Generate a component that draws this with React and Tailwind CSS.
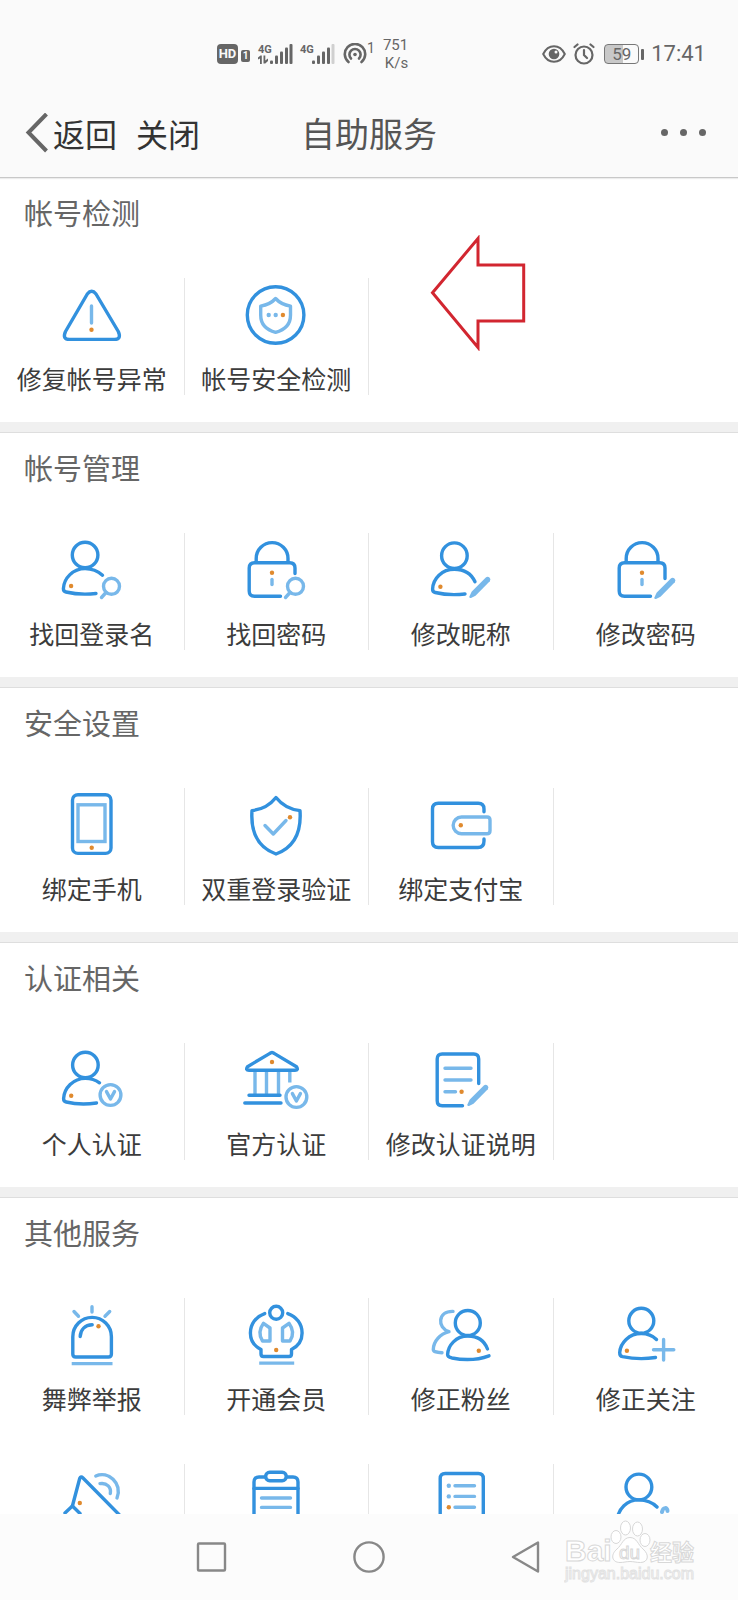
import React from "react";

const DARK = "#3291de";
const LIGHT = "#78b8ea";
const ORANGE = "#e08a2e";

/* ---------- Icon building blocks ---------- */

const Icon = ({ children }) => (
  <svg
    viewBox="0 0 64 64"
    className="w-16 h-16 overflow-visible"
    fill="none"
    stroke={DARK}
    strokeWidth="3.4"
    strokeLinecap="round"
    strokeLinejoin="round"
    aria-hidden="true"
  >
    {children}
  </svg>
);

const Dot = ({ x, y, color = ORANGE }) => (
  <circle cx={x} cy={y} r="2.2" fill={color} stroke="none" />
);

const Magnifier = () => (
  <g stroke={LIGHT}>
    <circle cx="51.5" cy="48.3" r="8" />
    <path d="M46 54.5 41.5 59.5" />
  </g>
);

const Pen = ({ x = 0, y = 0 }) => (
  <path
    transform={`translate(${x} ${y})`}
    d="M56.8 39.6a2.7 2.7 0 0 1 4 3.6L46.5 57.8 42 60Q40 60.4 40.4 58.4L42.6 53.8Z"
    fill={LIGHT}
    stroke="none"
  />
);

const VBadge = ({ x, y }) => (
  <g stroke={LIGHT} transform={`translate(${x} ${y})`}>
    <circle r="10.4" />
    <path d="M-4-3.4 0 4 4-3.4" />
  </g>
);

const LockBody = ({ end }) => (
  <>
    <path d="M12.2 24.7V20.5a15.9 15.9 0 0 1 31.8 0V24.7" strokeLinecap="butt" />
    <path
      d={`M51 ${end}V30Q51 24.7 45.7 24.7H10.5Q5.2 24.7 5.2 30V53Q5.2 58.3 10.5 58.3H36.5`}
    />
    <Dot x={28} y={34.7} />
    <path d="M28 41.5V46.5" stroke={LIGHT} />
  </>
);

/* ---------- Icons ---------- */

const WarningIcon = () => (
  <Icon>
    <path d="M27.3 11 5.5 48.5Q2 56.4 9.5 56.4H54.3Q61.8 56.4 58.3 48.5L36 11Q31.7 5.6 27.3 11Z" />
    <path d="M31.5 23V40" stroke={LIGHT} />
    <Dot x={31.5} y={46.7} />
  </Icon>
);

const CheckupIcon = () => (
  <Icon>
    <circle cx="31.6" cy="32" r="28.3" />
    <path
      d="M31.6 15.5Q37 21.5 46.5 23.2V32C46.5 41.5 40.5 47 31.6 49.3 22.7 47 16.7 41.5 16.7 32V23.2Q26.2 21.5 31.6 15.5Z"
      stroke={LIGHT}
    />
    <Dot x={24.7} y={32} color={LIGHT} />
    <Dot x={31.7} y={32} color={LIGHT} />
    <Dot x={38.9} y={32} />
  </Icon>
);

const FindUserIcon = () => (
  <Icon>
    <circle cx="25.1" cy="17" r="12.8" />
    <path d="M42.5 37.2C37.5 32.7 32 30.6 25.1 30.6 13 30.6 4 40 3.4 50.5Q3.3 53.4 6 54 20 57.3 36 55.5" />
    <Dot x={11.1} y={48} />
    <Magnifier />
  </Icon>
);

const FindLockIcon = () => (
  <Icon>
    <LockBody end={35.5} />
    <Magnifier />
  </Icon>
);

const EditUserIcon = () => (
  <Icon>
    <circle cx="25.4" cy="17.7" r="12.8" />
    <path d="M46 43.8C42.5 36 35 31.2 25.4 31.2 13 31.2 4 40.5 3.6 51Q3.5 53.9 6.2 54.5 20 57.8 36 56" />
    <Dot x={11.4} y={48.7} />
    <Pen />
  </Icon>
);

const EditLockIcon = () => (
  <Icon>
    <LockBody end={40.5} />
    <Pen y={1} />
  </Icon>
);

const PhoneIcon = () => (
  <Icon>
    <rect x="12.5" y="1.7" width="38.5" height="58.7" rx="5.5" />
    <rect x="18" y="11.8" width="27" height="36.7" stroke={LIGHT} strokeLinejoin="miter" />
    <Dot x={31.7} y={54.7} />
  </Icon>
);

const ShieldIcon = () => (
  <Icon>
    <path d="M32 4.5C38 12 45.5 16.5 56 17.6 57.5 39 51 54 32 61 13 54 6.5 39 8 17.6 18.5 16.5 26 12 32 4.5Z" />
    <path d="M21 32.5 29.3 41 42 27.5" stroke={LIGHT} />
    <Dot x={46} y={24.2} />
  </Icon>
);

const WalletIcon = () => (
  <Icon>
    <path d="M55 18.7V16Q55 10.2 49.2 10.2H9.3Q3.5 10.2 3.5 16V48.7Q3.5 54.5 9.3 54.5H49Q55 54.5 55 48V46" />
    <path
      d="M32.5 24H58Q61 24 61 27V37.7Q61 40.7 58 40.7H32.5A8.35 8.35 0 0 1 32.5 24Z"
      stroke={LIGHT}
    />
    <Dot x={31.8} y={32.3} />
  </Icon>
);

const PersonalVIcon = () => (
  <Icon>
    <circle cx="25.4" cy="17" r="12.8" />
    <path d="M39.5 34.8C35.5 31.9 31 30.4 25.4 30.4 13.2 30.4 4.2 40 3.6 50.5Q3.5 53.4 6.2 54 20 57.3 36.5 55" />
    <Dot x={11.2} y={47.7} />
    <VBadge x={50.5} y={47} />
  </Icon>
);

const OfficialVIcon = () => (
  <Icon>
    <path d="M25.5 5.6 3.5 18.7Q1.2 22.3 5 22.3H51Q54.8 22.3 52.5 18.7L30.5 5.6Q28 3.4 25.5 5.6Z" />
    <Dot x={28} y={14} />
    <path d="M11 24V46M22.5 24V46M34.5 24V46M45.8 24V34.5" stroke={LIGHT} strokeLinecap="butt" />
    <path d="M5 47.3H36M.8 55H37" />
    <VBadge x={52.4} y={49} />
  </Icon>
);

const EditDocIcon = () => (
  <Icon>
    <path d="M49.7 35.5V11Q49.7 6 44.7 6H13.2Q8.2 6 8.2 11V52.7Q8.2 57.7 13.2 57.7H33.5" />
    <path d="M16 20.3H42M16 32H42M16 43.7H26.5" stroke={LIGHT} />
    <Dot x={32.6} y={43.7} />
    <Pen x={-2} y={-2} />
  </Icon>
);

const SirenIcon = () => (
  <Icon>
    <path d="M12.8 51V33.7a19.3 19.3 0 0 1 38.6 0V51Q51.4 54 48.4 54H15.8Q12.8 54 12.8 51Z" />
    <path d="M20.2 33.5C20.5 26.5 25 22 32.2 21.7" />
    <path d="M32 3.7V9M14 8.5 18.5 13.2M49.7 8.5 45 13.2" stroke={LIGHT} />
    <path d="M11.7 60.6H52.5" stroke={LIGHT} strokeLinecap="butt" />
    <Dot x={38.5} y={23.2} />
  </Icon>
);

const MemberIcon = () => (
  <Icon>
    <circle cx="32.2" cy="9.8" r="6.5" />
    <path d="M20.7 10.6C12 13.7 6.4 21 6.4 30 6.4 37 10.5 43.2 17 46.5V51Q17 53.5 19.5 53.5H45Q47.5 53.5 47.5 51V46.5C54 43.2 58.1 37 58.1 30 58.1 21 52.5 13.7 43.8 10.6" />
    <path
      d="M19.5 20.3 26 25V38H18.5Q12.8 29.5 19.5 20.3ZM45 20.3 38.5 25V38H46Q51.7 29.5 45 20.3Z"
      stroke={LIGHT}
    />
    <path d="M15.2 60.1H50.2" stroke={LIGHT} strokeLinecap="butt" />
    <Dot x={32.2} y={47} />
  </Icon>
);

const FansIcon = () => (
  <Icon>
    <path
      d="M24 8.4C8.5 8 8 25 20 28.7 11 31 4.5 38.5 4.3 46.5 4.3 49 8 49.3 13 49.7"
      stroke={LIGHT}
    />
    <circle cx="38.8" cy="20" r="12.5" />
    <path d="M58.5 46C55.5 38 48.5 33 38.8 33 27 33 19 42.5 18.6 51.5 18.6 54 21 54.5 23 55 36 57.5 50 56.5 60 52.8" />
    <Dot x={49.8} y={47.7} />
  </Icon>
);

const FollowIcon = () => (
  <Icon>
    <circle cx="27.3" cy="17.8" r="12.5" />
    <path d="M42.5 36.5C38.5 32.5 33.5 30.5 27.3 30.5 15 30.5 6.3 40 5.7 49.5Q5.6 53 8.5 53.7 25 57 41.5 54.5" />
    <path d="M49.6 36.5V57M39.5 46.7H59.8" stroke={LIGHT} />
    <Dot x={12.9} y={47.7} />
  </Icon>
);

const MegaphoneIcon = () => (
  <Icon>
    <path d="M12.4 37 19.7 9.5Q20.8 6.8 23 9L60 46.5" />
    <path d="M5 44 12.4 37 20 44.5" />
    <path d="M40 14.6C47 13.5 51.5 18.5 50.3 24.5M35.8 7C48 1.5 62.5 14 57 29" stroke={LIGHT} />
    <Dot x={19.8} y={34} />
  </Icon>
);

const ClipboardIcon = () => (
  <Icon>
    <path d="M21.5 8H15Q10 8 10 13V60H54V13Q54 8 49 8H42.5" />
    <rect x="21.7" y="3.2" width="20.5" height="8.6" rx="4" />
    <path d="M10 19.4H54" />
    <path d="M17.5 29H46.5M17.5 38.4H46.5" stroke={LIGHT} />
  </Icon>
);

const ListIcon = () => (
  <Icon>
    <path d="M11.2 60V9.5Q11.2 4.5 16.2 4.5H49.3Q54.3 4.5 54.3 9.5V60Z" />
    <path d="M26 16.7H45.5M26 27.4H45.5M26 38.3H45.5" stroke={LIGHT} />
    <Dot x={19.8} y={16.7} color={LIGHT} />
    <Dot x={19.8} y={27.4} color={LIGHT} />
    <Dot x={19.8} y={38.3} />
  </Icon>
);

const UserLinkIcon = () => (
  <Icon>
    <circle cx="24.9" cy="18" r="12.9" />
    <path d="M43 38C38 33 32 30.9 24.9 30.9 13 30.9 4 40 3.4 50.5" />
    <path d="M48 43C49 38 53.5 38 53.5 42" stroke={LIGHT} strokeWidth="4" />
  </Icon>
);

/* ---------- Data ---------- */

const SECTIONS = [
  {
    title: "帐号检测",
    items: [
      { label: "修复帐号异常", icon: WarningIcon },
      { label: "帐号安全检测", icon: CheckupIcon },
    ],
    arrow: true,
  },
  {
    title: "帐号管理",
    items: [
      { label: "找回登录名", icon: FindUserIcon },
      { label: "找回密码", icon: FindLockIcon },
      { label: "修改昵称", icon: EditUserIcon },
      { label: "修改密码", icon: EditLockIcon },
    ],
  },
  {
    title: "安全设置",
    items: [
      { label: "绑定手机", icon: PhoneIcon },
      { label: "双重登录验证", icon: ShieldIcon },
      { label: "绑定支付宝", icon: WalletIcon },
    ],
  },
  {
    title: "认证相关",
    items: [
      { label: "个人认证", icon: PersonalVIcon },
      { label: "官方认证", icon: OfficialVIcon },
      { label: "修改认证说明", icon: EditDocIcon },
    ],
  },
  {
    title: "其他服务",
    items: [
      { label: "舞弊举报", icon: SirenIcon },
      { label: "开通会员", icon: MemberIcon },
      { label: "修正粉丝", icon: FansIcon },
      { label: "修正关注", icon: FollowIcon },
      { icon: MegaphoneIcon },
      { icon: ClipboardIcon },
      { icon: ListIcon },
      { icon: UserLinkIcon },
    ],
  },
];

/* ---------- Status bar ---------- */

const Signal = ({ weak }) => (
  <svg
    viewBox="0 0 35 22"
    className="w-[35px] h-[22px] overflow-visible"
    fill="#666"
    aria-hidden="true"
  >
    <text x="0" y="10" fontSize="11" fontWeight="700" fontFamily="Roboto, sans-serif">
      4G
    </text>
    {!weak && (
      <path d="M0 14.5 2.5 12.5H3.8V21H2V15.5L0 16.5ZM5.5 12.5H7.3V17.5L10 15.5V18L7.3 20.5H5.5Z" />
    )}
    <rect x="12" y="17.5" width="3" height="3.5" rx="1" />
    <rect x="17" y="12.5" width="3" height="8.5" rx="1" />
    <rect x="22" y="8.5" width="3" height="12.5" rx="1" />
    <rect x="27" y="4.5" width="3" height="16.5" rx="1" />
    <rect x="31.5" y="1" width="3" height="20" rx="1" fill={weak ? "#d0d0d0" : "#666"} />
  </svg>
);

const StatusBar = () => (
  <div className="flex h-[90px] items-center justify-between pt-[18px] pl-[217px] pr-8 font-[Roboto,sans-serif] text-[#666]">
    <div className="flex items-center">
      <span className="flex h-5 w-[21px] items-center justify-center rounded-[4px] bg-[#666] text-[13px] leading-5 font-bold text-[#fafafa]">
        HD
      </span>
      <span className="mt-1 ml-[3px] flex h-3 w-[9px] items-center justify-center rounded-[2px] bg-[#666] text-[10px] leading-3 font-bold text-[#fafafa]">
        1
      </span>
      <span className="ml-2 flex gap-[7px]">
        <Signal />
        <Signal weak />
      </span>
      <svg
        viewBox="0 0 24 22"
        className="ml-2 h-[22px] w-6"
        fill="none"
        stroke="#666"
        strokeWidth="2.6"
        strokeLinecap="round"
        aria-hidden="true"
      >
        <path d="M5.5 19A10.2 10.2 0 1 1 18.5 19" />
        <path d="M8 15.5A5.6 5.6 0 1 1 16 15.5" />
        <circle cx="12" cy="11.5" r="1.8" fill="#666" stroke="none" />
      </svg>
      <span className="mb-3 text-sm leading-3">1</span>
      <span className="ml-2 text-right text-[15px] leading-[18px]">
        751
        <br />
        K/s
      </span>
    </div>

    <div className="flex items-center">
      <svg
        viewBox="0 0 24 20"
        className="h-5 w-6"
        fill="none"
        stroke="#666"
        strokeWidth="2"
        aria-hidden="true"
      >
        <path d="M1.2 10Q5 2.2 12 2.2T22.8 10Q19 17.8 12 17.8T1.2 10Z" />
        <circle cx="12" cy="10" r="5.3" fill="#666" stroke="none" />
        <circle cx="14" cy="8" r="1.5" fill="#fafafa" stroke="none" />
      </svg>
      <svg
        viewBox="0 0 22 22"
        className="ml-[7px] h-[22px] w-[22px]"
        fill="none"
        stroke="#666"
        strokeWidth="2.2"
        strokeLinecap="round"
        aria-hidden="true"
      >
        <circle cx="11" cy="12" r="8.5" />
        <path d="M11 7V12L14 15M1.5 4 4.5 1.5M20.5 4 17.5 1.5" />
      </svg>
      <span className="ml-[9px] flex items-center gap-[2px]">
        <span className="flex h-5 w-[35px] items-center justify-center rounded-[4px] border border-[#777] bg-linear-to-r from-[#c8c8c8] from-55% to-[#fafafa] to-55% text-[17px] leading-5">
          59
        </span>
        <span className="h-[11px] w-[3px] rounded-[1px] bg-[#666]" />
      </span>
      <span className="ml-[7px] text-[22px] leading-6">17:41</span>
    </div>
  </div>
);

/* ---------- Title bar ---------- */

const TitleBar = () => (
  <div className="grid h-[87px] grid-cols-[1fr_auto_1fr] items-center pb-[2px]">
    <div className="flex gap-[19px] pl-[25px] text-[32px] leading-10 text-[#333]">
      <button type="button" className="flex items-center gap-1">
        <svg
          viewBox="0 0 24 40"
          className="h-10 w-6"
          fill="none"
          stroke="#666"
          strokeWidth="4"
          aria-hidden="true"
        >
          <path d="M21.5 1 3.5 19.5 21.5 38" />
        </svg>
        返回
      </button>
      <button type="button">关闭</button>
    </div>
    <h1 className="text-[34px] leading-10 text-[#555]">自助服务</h1>
    <button type="button" aria-label="更多" className="mr-8 flex gap-3 justify-self-end">
      <span className="size-[7px] rounded-full bg-[#666]" />
      <span className="size-[7px] rounded-full bg-[#666]" />
      <span className="size-[7px] rounded-full bg-[#666]" />
    </button>
  </div>
);

/* ---------- Sections ---------- */

const ServiceItem = ({ label, icon: ItemIcon, last }) => (
  <a
    href="#"
    className={`flex h-[117px] flex-col items-center pt-[5px] ${
      last ? "" : "border-r border-[#e6e6e6]"
    }`}
  >
    <ItemIcon />
    {label && (
      <span className="mt-[15px] text-[25px] leading-8 whitespace-nowrap text-[#3c3c3c]">
        {label}
      </span>
    )}
  </a>
);

const Section = ({ title, items, arrow }) => (
  <section className="relative border-b border-[#dedede] bg-[#f0f0f0] pb-[10px]">
    <div className="bg-white pb-[27px]">
      <h2 className="h-[100px] pt-[14px] pl-6 text-[29px] leading-10 text-[#666]">{title}</h2>
      <div className="grid grid-cols-4 gap-y-[49px]">
        {items.map((item, index) => (
          <ServiceItem key={index} {...item} last={index % 4 === 3} />
        ))}
      </div>
    </div>

    {/* Pointer drawn over the page */}
    {arrow && (
      <svg
        viewBox="0 0 96 116"
        className="absolute top-[57px] left-[430px] h-[116px] w-24"
        fill="none"
        stroke="#d22630"
        strokeWidth="3"
        aria-hidden="true"
      >
        <path d="M2.5 57.7 48 3.5V30H93.7V86H48V112.5Z" />
      </svg>
    )}
  </section>
);

/* ---------- Bottom bar ---------- */

const Watermark = () => (
  <svg
    viewBox="0 0 140 68"
    className="absolute top-[3px] right-[34px] h-[68px] w-[140px]"
    fill="#fff"
    stroke="#d8d8d8"
    strokeWidth="1"
    fontFamily="'Liberation Sans', 'Noto Sans CJK SC', sans-serif"
    aria-hidden="true"
  >
    <text x="1" y="44" fontSize="30" fontWeight="700">
      Bai
    </text>
    <ellipse cx="52" cy="20" rx="5" ry="6.5" />
    <ellipse cx="61.5" cy="11" rx="5" ry="7" />
    <ellipse cx="73.5" cy="12" rx="5" ry="7" />
    <ellipse cx="81" cy="23" rx="5" ry="6.5" />
    <path d="M66 20.5C73 20.5 74 28 79 32 86 38 84 45.5 76.5 45.5 72 45.5 70 44.5 66 44.500S60 45.5 56 45.5C48 45.5 46 38 53 32 58 28 59 20.5 66 20.5Z" />
    <text x="55" y="42" fontSize="19">
      du
    </text>
    <text x="86" y="43" fontSize="22" fontWeight="700" fontFamily="'Noto Sans CJK SC', sans-serif">
      经验
    </text>
    <text x="1" y="62" fontSize="16" stroke="#e2e2e2">
      jingyan.baidu.com
    </text>
  </svg>
);

const BottomBar = () => (
  <nav className="relative flex h-[86px] shrink-0 items-center justify-center gap-[125px] bg-[#fcfcfc]">
    <button type="button" aria-label="最近任务">
      <svg viewBox="0 0 32 32" className="size-8" fill="none" stroke="#888" strokeWidth="2.4">
        <rect x="2" y="2.5" width="27" height="27" rx="1" />
      </svg>
    </button>
    <button type="button" aria-label="主页">
      <svg viewBox="0 0 32 32" className="size-8" fill="none" stroke="#888" strokeWidth="2.4">
        <circle cx="16" cy="16" r="14.6" />
      </svg>
    </button>
    <button type="button" aria-label="返回">
      <svg
        viewBox="0 0 32 32"
        className="size-8"
        fill="none"
        stroke="#888"
        strokeWidth="2.4"
        strokeLinejoin="round"
      >
        <path d="M3 16 28 1.5V30.5Z" />
      </svg>
    </button>
    <Watermark />
  </nav>
);

const App = () => {
  return (
    <div className="flex h-screen flex-col bg-white font-['Noto_Sans_CJK_SC',sans-serif]">
      <header className="z-10 shrink-0 border-b border-[#c8c8c8] bg-[#fafafa] shadow-[0_1px_1px_#ececec]">
        <StatusBar />
        <TitleBar />
      </header>

      <main className="flex-1 overflow-y-auto [scrollbar-width:none]">
        {SECTIONS.map((section) => (
          <Section key={section.title} {...section} />
        ))}
      </main>

      <BottomBar />
    </div>
  );
};

export default App;
